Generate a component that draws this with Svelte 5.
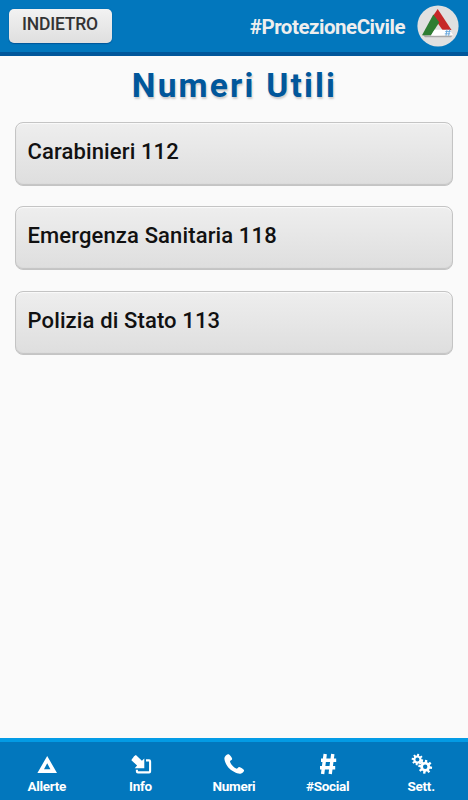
<script>
  const numbers = ['Carabinieri 112', 'Emergenza Sanitaria 118', 'Polizia di Stato 113'];
  const tabs = [
    { id: 'alert', label: 'Allerte' },
    { id: 'info', label: 'Info' },
    { id: 'phone', label: 'Numeri' },
    { id: 'hash', label: '#Social' },
    { id: 'gears', label: 'Sett.' }
  ];

  function gear(cx, cy, inner, outer, hole, offset) {
    const points = [];
    for (let i = 0; i < 8; i++) {
      const a = (i * Math.PI) / 4 + offset;
      for (const [d, r] of [[-0.25, inner], [-0.17, outer], [0.17, outer], [0.25, inner]]) {
        points.push(`${(cx + r * Math.cos(a + d)).toFixed(2)} ${(cy + r * Math.sin(a + d)).toFixed(2)}`);
      }
    }
    return `M${points.join('L')}ZM${cx - hole} ${cy}a${hole} ${hole} 0 1 0 ${hole * 2} 0a${hole} ${hole} 0 1 0 ${-hole * 2} 0Z`;
  }
</script>

<div class="app">
  <header>
    <button class="back">INDIETRO</button>
    <span class="brand">#ProtezioneCivile</span>
    <svg class="logo" width="42" height="42" viewBox="0 0 42 42">
      <circle cx="21" cy="21" r="20.6" fill="#e0e0e0" />
      <path d="M6 30L18 31L36 30L34 32.2H8Z" fill="#a8a8a8" />
      <path d="M20.7 4L34.5 25H25.5L15.8 11.2Z" fill="#c62828" />
      <path d="M16.3 9.6L22.3 17.3L14 30.2H5Z" fill="#2e7d32" />
      <path d="M17.5 24.8H32.5L36.3 30.5H14Z" fill="#fff" />
      <path d="M30 24.5L29 30.8M32.6 24.5L31.6 30.8M28.2 26.6H33.6M27.8 28.8H33.2" stroke="#64a5dc" stroke-width=".9" fill="none" />
    </svg>
  </header>

  <main>
    <h1>Numeri Utili</h1>
    <div class="list">
      {#each numbers as n}
        <button class="card">{n}</button>
      {/each}
    </div>
  </main>

  <nav>
    {#each tabs as tab}
      <a class="tab" href="#{tab.id}">
        <svg width="24" height="24" viewBox="0 0 24 24" fill="#fff">
          {#if tab.id === 'alert'}
            <path fill-rule="evenodd" d="M12.2 4L22 21H2.4ZM12.2 11.2L9 17.2H15.4Z" />
          {:else if tab.id === 'info'}
            <path d="M6.9 3L12.9 8.8L15.3 6.6V16.3H5.7L8.1 13.6L2.4 8.2Q2.8 6.8 3.9 6Q4.7 3.8 6.9 3Z" />
            <path d="M17 8.4H20.1Q21.1 8.4 21.1 9.4V19.4Q21.1 20.4 20.1 20.4H8.9Q7.9 20.4 7.9 19.4V17.8" fill="none" stroke="#fff" stroke-width="2.1" />
          {:else if tab.id === 'phone'}
            <path d="M6.8 2.3C8.3 3.2 10 5.5 10.2 7C10.2 8 7.9 8.6 8 9.6C8.6 12.2 11.6 15.4 14.2 16.6C15.4 17 16.1 14.8 17.2 14.9C18.9 15.3 21.3 17 22 18.1C22.4 19.5 20.3 21.4 18.5 21.7C15 22.1 10.5 19.3 7.6 16.8C4.9 14.2 2.2 9.2 2.4 6C2.7 4.2 5 1.9 6.8 2.3Z" />
          {:else if tab.id === 'hash'}
            <path d="M9.2 2L6.6 22M16.8 2L14.2 22M5 8.2H20.2M4 15.7H19.2" fill="none" stroke="#fff" stroke-width="3.4" />
          {:else}
            <path fill-rule="evenodd" d={gear(7.4, 7.6, 4.1, 5.8, 2, 0.15)} />
            <path fill-rule="evenodd" d={gear(15.2, 14.8, 4.9, 7, 2.2, 0.15)} />
          {/if}
        </svg>
        <span>{tab.label}</span>
      </a>
    {/each}
  </nav>
</div>

<style>
  :global(body) { margin: 0; }
  .app {
    height: 800px;
    display: flex;
    flex-direction: column;
    background: #fafafa;
    font-family: Roboto, sans-serif;
    overflow: hidden;
  }
  header {
    box-sizing: border-box;
    height: 56px;
    flex: none;
    display: flex;
    align-items: center;
    padding: 0 9px;
    background: #0277bd;
    border-bottom: 4px solid #01579b;
  }
  button { font-family: inherit; margin: 0; }
  .back {
    box-sizing: border-box;
    width: 103px;
    height: 34px;
    padding: 0 1px 4px 0;
    border: 0;
    border-radius: 5px;
    background: linear-gradient(#f2f2f2, #dfdfdf);
    box-shadow: 0 1px 1px #01579b, 0 0 1px #01579b;
    color: #333;
    font-size: 17.5px;
    font-weight: 500;
    letter-spacing: -.2px;
  }
  .brand {
    margin-left: auto;
    margin-right: 12px;
    padding-top: 2px;
    color: #eee;
    font-size: 20.5px;
    font-weight: 700;
    letter-spacing: -.47px;
    line-height: 24px;
  }
  .logo { display: block; }
  main { flex: 1; padding: 0 15px; }
  h1 {
    margin: 8px 0 0;
    height: 42px;
    line-height: 43px;
    text-align: center;
    text-indent: 1px;
    color: #01579b;
    font-size: 33.5px;
    font-weight: 700;
    letter-spacing: 2.2px;
    text-shadow: 1px 2px 2px #ccc;
  }
  .list {
    display: flex;
    flex-direction: column;
    gap: 20.5px;
    padding-top: 15.5px;
  }
  .card {
    box-sizing: border-box;
    height: 64px;
    padding: 0 11.5px 5px;
    border: 1px solid #c4c4c4;
    border-radius: 8px;
    background: linear-gradient(#eee, #dedede);
    box-shadow: inset 0 1px 1px #fafafa, inset 0 -1px 1px #c4c4c4;
    color: #111;
    font-size: 22px;
    font-weight: 500;
    letter-spacing: .13px;
    text-align: left;
  }
  nav {
    box-sizing: border-box;
    height: 62px;
    flex: none;
    display: flex;
    border-top: 4px solid #039be5;
    background: #0277bd;
  }
  .tab {
    flex: 1;
    display: flex;
    flex-direction: column;
    align-items: center;
    padding-top: 10px;
    color: #fff;
    font-size: 13.5px;
    font-weight: 700;
    letter-spacing: -.3px;
    line-height: 21px;
    text-decoration: none;
  }
  .tab svg { display: block; margin-left: 1px; }
</style>
